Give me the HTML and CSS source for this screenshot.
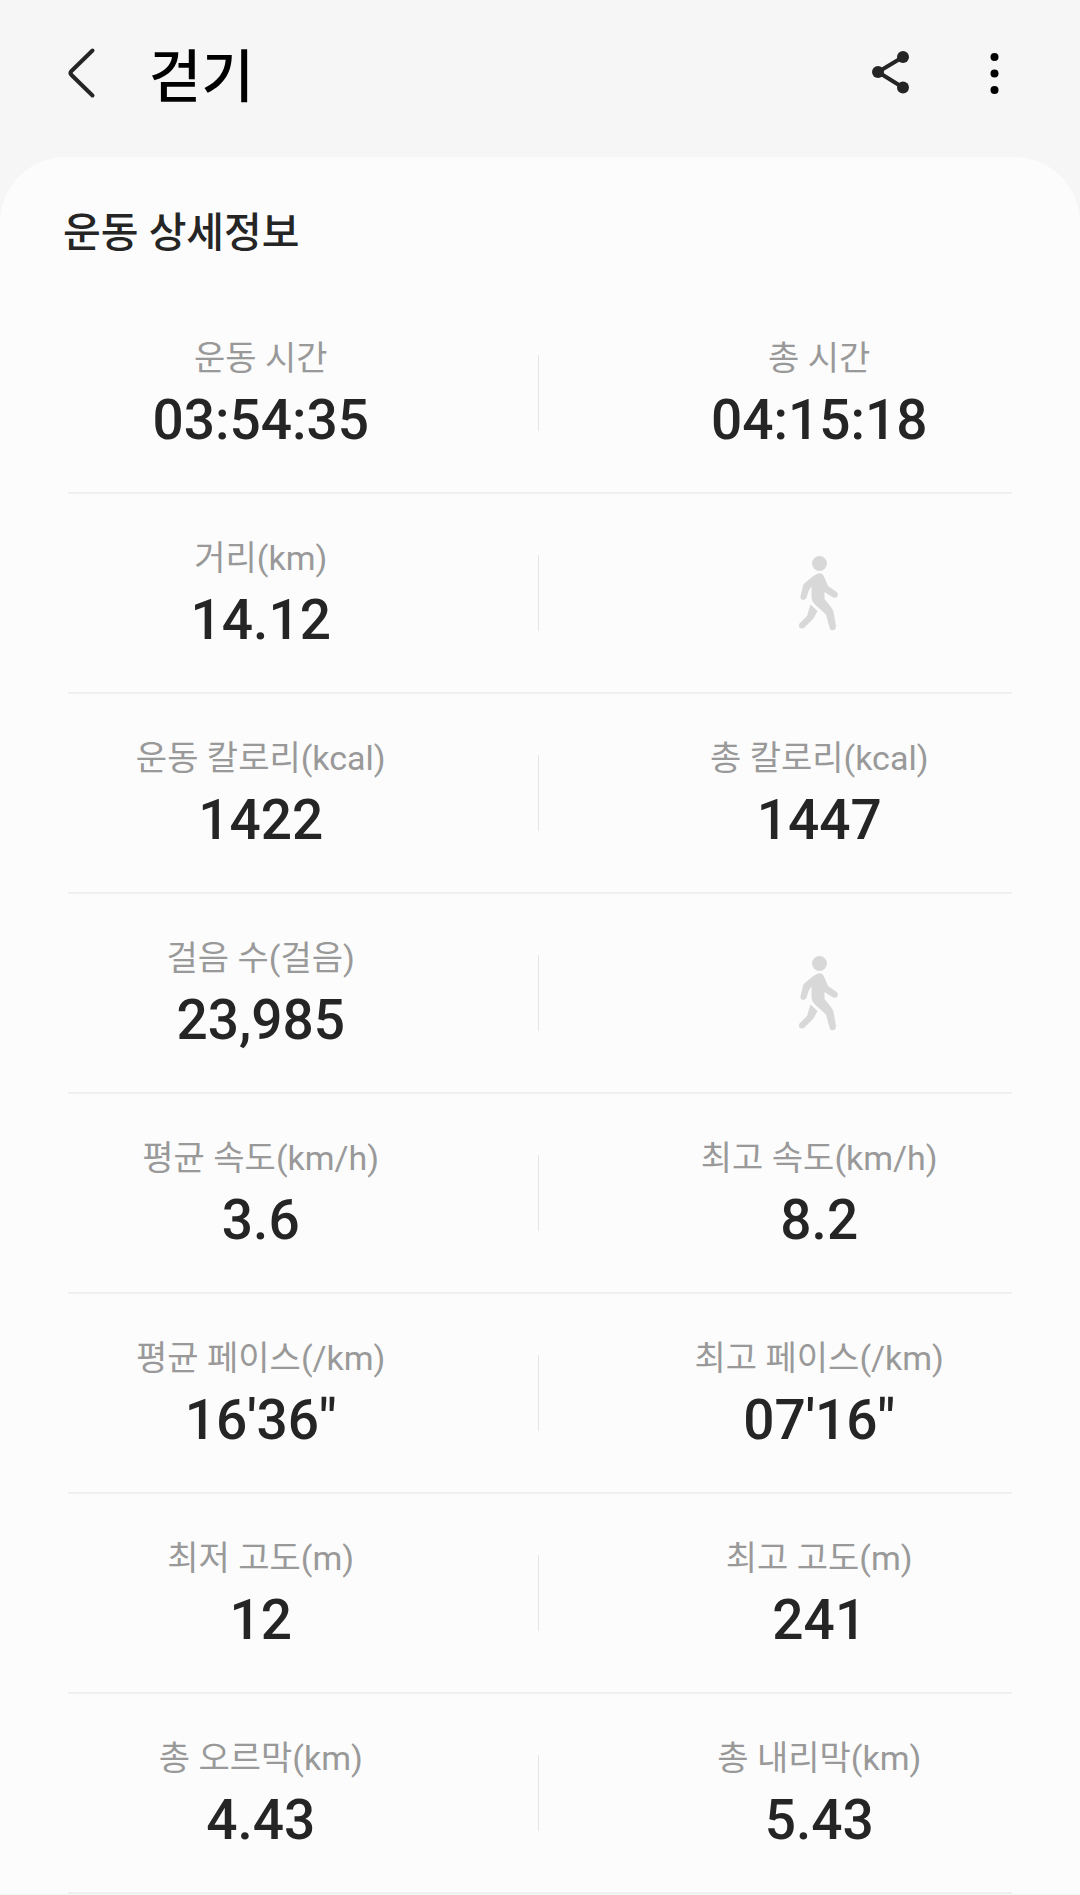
FILE: index.html
```html
<!DOCTYPE html>
<html lang="ko">
<head>
    <meta charset="UTF-8">
    <meta name="viewport" content="width=device-width, initial-scale=1.0">
    <title>걷기</title>
    <link rel="stylesheet" href="styles.css">
</head>
<body>
    <header class="top-bar">
        <button class="icon-button" aria-label="뒤로">
            <svg width="60" height="60" viewBox="0 0 60 60" fill="none" stroke="#252525" stroke-width="4" stroke-linecap="round" stroke-linejoin="round">
                <path d="M40.500 6.500 L19.500 27 Q17.500 29 19.500 31 L40.500 51.500"/>
            </svg>
        </button>
        <h1 class="title">걷기</h1>
        <button class="icon-button" aria-label="공유">
            <svg width="60" height="60" viewBox="0 0 60 60" fill="#252525">
                <path d="M43 13 L18 28 L43 43.500" fill="none" stroke="#252525" stroke-width="4"/>
                <circle cx="43" cy="13" r="6"/>
                <circle cx="18" cy="28" r="6"/>
                <circle cx="43" cy="43.500" r="6"/>
            </svg>
        </button>
        <button class="icon-button" aria-label="더보기">
            <svg width="60" height="60" viewBox="0 0 60 60" fill="#000">
                <circle cx="30.500" cy="13" r="4"/>
                <circle cx="30.500" cy="29.500" r="4"/>
                <circle cx="30.500" cy="46" r="4"/>
            </svg>
        </button>
    </header>

    <main class="sheet">
        <h2 class="section-title">운동 상세정보</h2>

        <div class="row">
            <div class="cell">
                <span class="label">운동 시간</span>
                <span class="value">03:54:35</span>
            </div>
            <div class="divider"></div>
            <div class="cell">
                <span class="label">총 시간</span>
                <span class="value">04:15:18</span>
            </div>
        </div>

        <div class="row">
            <div class="cell">
                <span class="label">거리(km)</span>
                <span class="value">14.12</span>
            </div>
            <div class="divider"></div>
            <div class="cell">
                <svg class="walker" viewBox="0 0 40 76" aria-hidden="true">
                    <circle cx="20.500" cy="8.500" r="7.500"/>
                    <path d="M19 18.500 C22 17.500 24 19 25 21.500 L29 31 L37 36.500 C41 39.500 38 44 34 42.500 L25.500 37 L25.500 44 L32 52 C33 53.500 34 55 34.500 57 L37 71 C37.500 76 31.500 77 30.500 72.500 L27 59.500 L16 49.500 C13 46.500 12.500 44 12.500 41 L12.500 31.500 L10 35 L7.500 42.500 C6 46.500 0.500 45 1.500 41 L4 31 C4.500 29 5.500 28 7 27 L15 20.500 Z"/>
                    <path d="M11.500 49.500 L18.500 56 L15 62.500 C14.500 63.500 14 64.500 13 65 L5.500 72.500 C2 75.500 -2.500 71.500 1 68 L8 61 Z"/>
                </svg>
            </div>
        </div>

        <div class="row">
            <div class="cell">
                <span class="label">운동 칼로리(kcal)</span>
                <span class="value">1422</span>
            </div>
            <div class="divider"></div>
            <div class="cell">
                <span class="label">총 칼로리(kcal)</span>
                <span class="value">1447</span>
            </div>
        </div>

        <div class="row">
            <div class="cell">
                <span class="label">걸음 수(걸음)</span>
                <span class="value">23,985</span>
            </div>
            <div class="divider"></div>
            <div class="cell">
                <svg class="walker" viewBox="0 0 40 76" aria-hidden="true">
                    <circle cx="20.500" cy="8.500" r="7.500"/>
                    <path d="M19 18.500 C22 17.500 24 19 25 21.500 L29 31 L37 36.500 C41 39.500 38 44 34 42.500 L25.500 37 L25.500 44 L32 52 C33 53.500 34 55 34.500 57 L37 71 C37.500 76 31.500 77 30.500 72.500 L27 59.500 L16 49.500 C13 46.500 12.500 44 12.500 41 L12.500 31.500 L10 35 L7.500 42.500 C6 46.500 0.500 45 1.500 41 L4 31 C4.500 29 5.500 28 7 27 L15 20.500 Z"/>
                    <path d="M11.500 49.500 L18.500 56 L15 62.500 C14.500 63.500 14 64.500 13 65 L5.500 72.500 C2 75.500 -2.500 71.500 1 68 L8 61 Z"/>
                </svg>
            </div>
        </div>

        <div class="row">
            <div class="cell">
                <span class="label">평균 속도(km/h)</span>
                <span class="value">3.6</span>
            </div>
            <div class="divider"></div>
            <div class="cell">
                <span class="label">최고 속도(km/h)</span>
                <span class="value">8.2</span>
            </div>
        </div>

        <div class="row">
            <div class="cell">
                <span class="label">평균 페이스(/km)</span>
                <span class="value">16'36"</span>
            </div>
            <div class="divider"></div>
            <div class="cell">
                <span class="label">최고 페이스(/km)</span>
                <span class="value">07'16"</span>
            </div>
        </div>

        <div class="row">
            <div class="cell">
                <span class="label">최저 고도(m)</span>
                <span class="value">12</span>
            </div>
            <div class="divider"></div>
            <div class="cell">
                <span class="label">최고 고도(m)</span>
                <span class="value">241</span>
            </div>
        </div>

        <div class="row">
            <div class="cell">
                <span class="label">총 오르막(km)</span>
                <span class="value">4.43</span>
            </div>
            <div class="divider"></div>
            <div class="cell">
                <span class="label">총 내리막(km)</span>
                <span class="value">5.43</span>
            </div>
        </div>
    </main>
</body>
</html>
```
FILE: styles.css
```css
* {
    box-sizing: border-box;
}
body {
    margin: 0;
    font-family: Roboto, "Noto Sans CJK KR", sans-serif;
    background-color: #f6f6f6;
    color: #252525;
}
.top-bar {
    display: flex;
    align-items: center;
    height: 157px;
    padding: 0 56px 10px 52px;
}
.icon-button {
    display: flex;
    padding: 0;
    border: none;
    background: none;
    cursor: pointer;
}
.icon-button + .icon-button {
    margin-left: 44px;
}
.title {
    flex: 1;
    margin: 0 0 0 37px;
    padding-top: 8px;
    font-size: 57px;
    font-weight: 500;
    line-height: 64px;
    color: #000;
}
.sheet {
    padding: 40px 68px 0;
    background-color: #fcfcfc;
    border-radius: 66px 66px 0 0;
}
.section-title {
    margin: 0 -5px 25px;
    font-size: 41px;
    font-weight: 500;
    line-height: 72px;
}
.row {
    display: grid;
    grid-template-columns: 1fr auto 1fr;
    align-items: center;
    height: 200px;
    border-bottom: 2px solid #f0f0f0;
}
.cell {
    display: flex;
    flex-direction: column;
    align-items: center;
    white-space: nowrap;
}
.label {
    font-size: 34px;
    line-height: 54px;
    color: #999;
}
.value {
    font-size: 55px;
    font-weight: 500;
    line-height: 70px;
}
.divider {
    width: 1px;
    height: 76px;
    margin: 0 88px 0 84px;
    background-color: #e4e4e4;
}
.walker {
    width: 40px;
    height: 76px;
    fill: #d8d8d8;
}
```
